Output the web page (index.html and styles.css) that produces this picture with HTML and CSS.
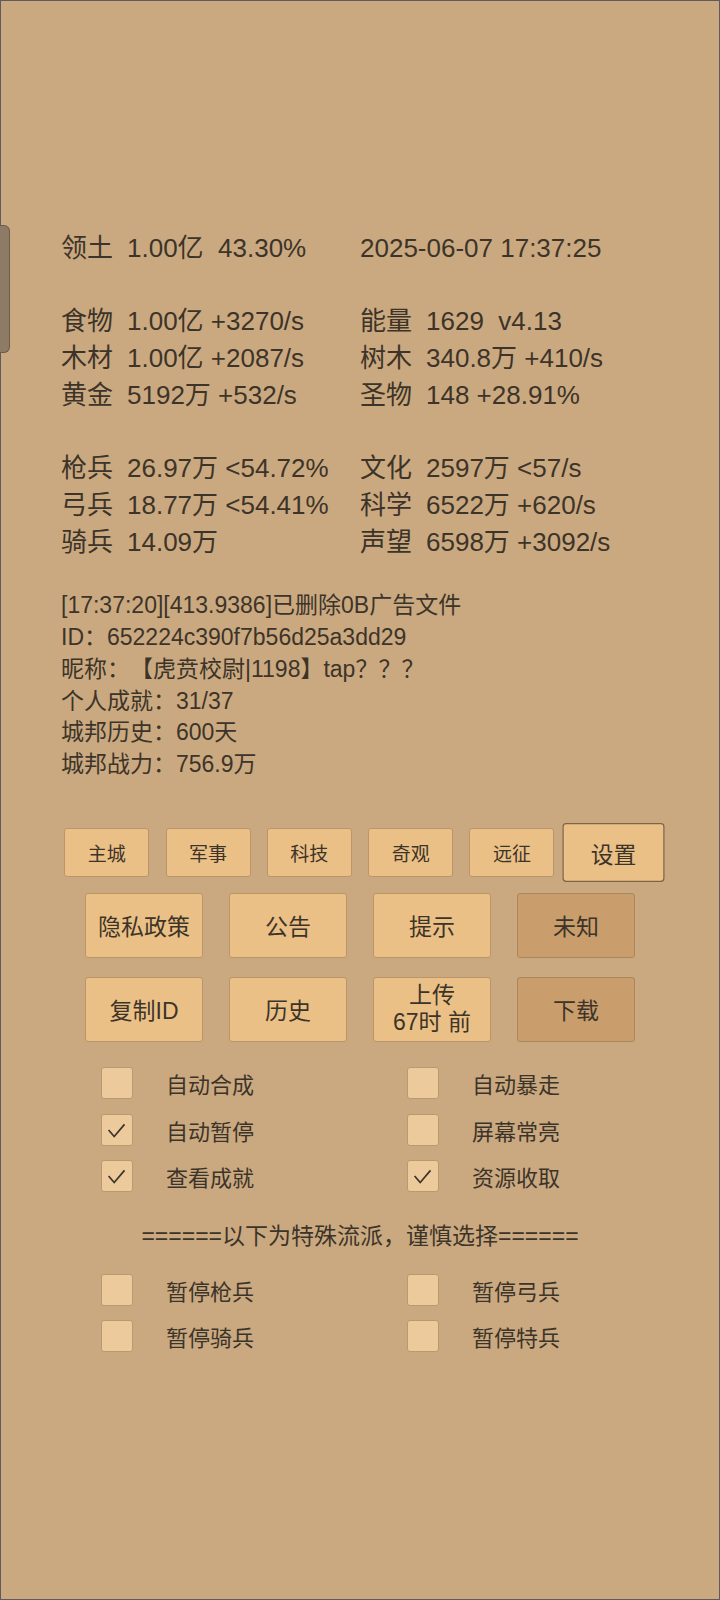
FILE: index.html
```html
<!DOCTYPE html>
<html lang="zh-CN">
<head>
    <meta charset="UTF-8">
    <meta name="viewport" content="width=device-width, initial-scale=1.0">
    <title>城邦</title>
    <link rel="stylesheet" href="styles.css">
</head>
<body>
    <div class="screen">
        <div class="edge-tab"></div>

        <div class="stats">
            <div class="cell"><span class="label">领土</span><span class="value">1.00亿  43.30%</span></div>
            <div class="cell"><span class="value">2025-06-07 17:37:25</span></div>
            <div class="blank"></div>
            <div class="cell"><span class="label">食物</span><span class="value">1.00亿 +3270/s</span></div>
            <div class="cell"><span class="label">能量</span><span class="value">1629  v4.13</span></div>
            <div class="cell"><span class="label">木材</span><span class="value">1.00亿 +2087/s</span></div>
            <div class="cell"><span class="label">树木</span><span class="value">340.8万 +410/s</span></div>
            <div class="cell"><span class="label">黄金</span><span class="value">5192万 +532/s</span></div>
            <div class="cell"><span class="label">圣物</span><span class="value">148 +28.91%</span></div>
            <div class="blank"></div>
            <div class="cell"><span class="label">枪兵</span><span class="value">26.97万 &lt;54.72%</span></div>
            <div class="cell"><span class="label">文化</span><span class="value">2597万 &lt;57/s</span></div>
            <div class="cell"><span class="label">弓兵</span><span class="value">18.77万 &lt;54.41%</span></div>
            <div class="cell"><span class="label">科学</span><span class="value">6522万 +620/s</span></div>
            <div class="cell"><span class="label">骑兵</span><span class="value">14.09万</span></div>
            <div class="cell"><span class="label">声望</span><span class="value">6598万 +3092/s</span></div>
        </div>

        <div class="info">
            <div>[17:37:20][413.9386]已删除0B广告文件</div>
            <div>ID：652224c390f7b56d25a3dd29</div>
            <div>昵称：【虎贲校尉|1198】tap？？？</div>
            <div>个人成就：31/37</div>
            <div>城邦历史：600天</div>
            <div>城邦战力：756.9万</div>
        </div>

        <div class="nav-row">
            <button class="nav-btn">主城</button>
            <button class="nav-btn">军事</button>
            <button class="nav-btn">科技</button>
            <button class="nav-btn">奇观</button>
            <button class="nav-btn">远征</button>
            <button class="nav-btn active">设置</button>
        </div>

        <div class="action-row">
            <button class="act-btn">隐私政策</button>
            <button class="act-btn">公告</button>
            <button class="act-btn">提示</button>
            <button class="act-btn dim">未知</button>
        </div>
        <div class="action-row second">
            <button class="act-btn">复制ID</button>
            <button class="act-btn">历史</button>
            <button class="act-btn two-line">上传<br>67时 前</button>
            <button class="act-btn dim">下载</button>
        </div>

        <div class="options">
            <label class="option"><span class="box"></span>自动合成</label>
            <label class="option"><span class="box"></span>自动暴走</label>
            <label class="option"><span class="box checked"><svg viewBox="0 0 32 32"><polyline points="7,16 13,23 24,10"/></svg></span>自动暂停</label>
            <label class="option"><span class="box"></span>屏幕常亮</label>
            <label class="option"><span class="box checked"><svg viewBox="0 0 32 32"><polyline points="7,16 13,23 24,10"/></svg></span>查看成就</label>
            <label class="option"><span class="box checked"><svg viewBox="0 0 32 32"><polyline points="7,16 13,23 24,10"/></svg></span>资源收取</label>
        </div>

        <div class="divider">======以下为特殊流派，谨慎选择======</div>

        <div class="options special">
            <label class="option"><span class="box"></span>暂停枪兵</label>
            <label class="option"><span class="box"></span>暂停弓兵</label>
            <label class="option"><span class="box"></span>暂停骑兵</label>
            <label class="option"><span class="box"></span>暂停特兵</label>
        </div>
    </div>
</body>
</html>
```

FILE: styles.css
```css
body {
    margin: 0;
    font-family: "Liberation Sans", "Noto Sans CJK SC", sans-serif;
    background: #caa980;
    color: #3d3429;
    text-spacing-trim: space-all;
}
.screen {
    position: relative;
    width: 720px;
    height: 1600px;
    box-sizing: border-box;
    border: 1px solid #5e5c5a;
    background: #caa980;
    padding-top: 229px;
}
.edge-tab {
    position: absolute;
    left: -1px;
    top: 224px;
    width: 9px;
    height: 126px;
    background: #8d7b65;
    border: 1px solid #6a5d4d;
    border-left: none;
    border-radius: 0 6px 6px 0;
}
.stats {
    display: grid;
    grid-template-columns: 299px 1fr;
    grid-auto-rows: 36.7px;
    padding-left: 60px;
    font-size: 26px;
    line-height: 36.7px;
}
.stats .blank {
    grid-column: 1 / 3;
}
.cell {
    white-space: pre;
}
.label {
    display: inline-block;
    width: 66px;
}
.info {
    margin-top: 30px;
    padding-left: 60px;
    font-size: 23px;
    line-height: 31.8px;
}
.nav-row {
    display: flex;
    justify-content: center;
    gap: 16.3px;
    margin-top: 47px;
}
.nav-btn,
.act-btn {
    font-family: "Liberation Sans", "Noto Sans CJK SC", sans-serif;
    color: #3d3429;
    background: #ebc086;
    border: 1px solid #b99569;
    border-radius: 3px;
    padding: 0;
    box-sizing: border-box;
}
.nav-btn {
    width: 85px;
    height: 49px;
    font-size: 19px;
}
.nav-btn.active {
    transform: scale(1.2);
    border-color: #7e6447;
}
.action-row {
    display: flex;
    justify-content: center;
    gap: 26px;
    margin-top: 16px;
}
.action-row.second {
    margin-top: 19px;
}
.act-btn {
    width: 118px;
    height: 65px;
    font-size: 23px;
}
.act-btn.dim {
    background: #c99e6c;
    border-color: #a9865b;
}
.act-btn.two-line {
    line-height: 27px;
}
.options {
    display: grid;
    grid-template-columns: 306px 1fr;
    grid-auto-rows: 46.5px;
    padding-left: 100px;
    margin-top: 18px;
    font-size: 22px;
}
.options.special {
    margin-top: 10px;
}
.option {
    display: flex;
    align-items: center;
    gap: 33px;
}
.box {
    width: 32px;
    height: 32px;
    box-sizing: border-box;
    background: #ecca9b;
    border: 1px solid #ba996e;
    border-radius: 3px;
    display: flex;
}
.box svg {
    width: 100%;
    height: 100%;
}
.box polyline {
    fill: none;
    stroke: #3d3429;
    stroke-width: 1.8;
}
.divider {
    margin-top: 17px;
    text-align: center;
    font-size: 23px;
    line-height: 40px;
}
```
